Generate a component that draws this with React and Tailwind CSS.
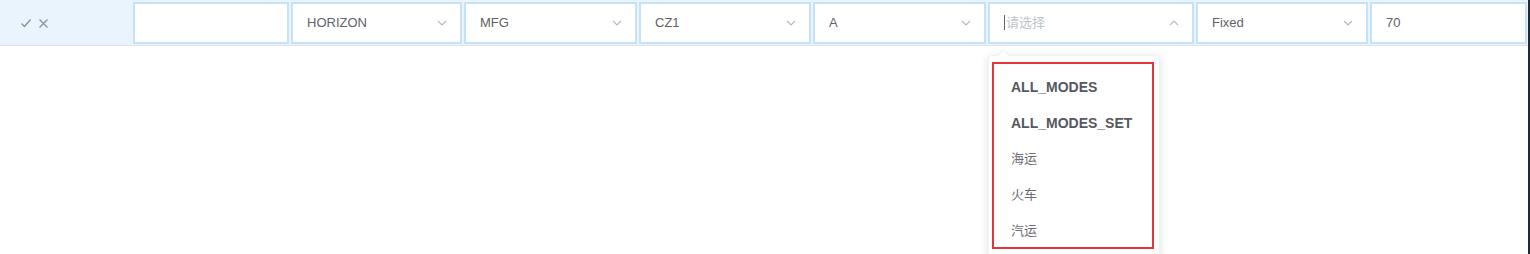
import React from 'react';

const font = { fontFamily: '"Liberation Sans", "Noto Sans CJK SC", sans-serif' };

const Chevron = ({ up }) => (
  <svg width="12" height="12" viewBox="0 0 12 12" className="text-[#b4b8bf]">
    <path d={up ? 'M2 8 L6 4 L10 8' : 'M2 4 L6 8 L10 4'} fill="none" stroke="currentColor" strokeWidth="1.1" />
  </svg>
);

const Select = ({ value, width, placeholder, open }) => (
  <div
    className={`h-[42px] flex items-center justify-between bg-white border-2 border-[#c6e2f9] pl-[14px] pr-[12px] ${width}`}
  >
    {placeholder ? (
      <span className="flex items-center text-[13px] text-[#c0c4cc]">
        <span className="w-px h-[15px] bg-[#606266] mr-px"></span>
        {placeholder}
      </span>
    ) : (
      <span className="text-[13px] text-[#606266]">{value}</span>
    )}
    <Chevron up={open} />
  </div>
);

export default function App() {
  const options = [
    { label: 'ALL_MODES', bold: true },
    { label: 'ALL_MODES_SET', bold: true },
    { label: '海运' },
    { label: '火车' },
    { label: '汽运' },
  ];

  return (
    <div className="relative w-[1530px] h-[254px] bg-white flex overflow-hidden" style={font}>
      <div className="flex-1">
        <div className="h-[46px] flex items-center gap-[2px] bg-[#e9f4fd] border-b border-[#dfe3e8]">
          <div className="w-[131px] h-full flex items-center pl-[20px] pt-px gap-[6px] text-[#8b8f96]">
            <svg width="12" height="12" viewBox="0 0 12 12">
              <path d="M1.5 6.5 L4.5 9.5 L10.5 2.5" fill="none" stroke="currentColor" strokeWidth="1.3" />
            </svg>
            <svg width="11" height="11" viewBox="0 0 11 11">
              <path d="M1.5 1.5 L9.5 9.5 M9.5 1.5 L1.5 9.5" fill="none" stroke="currentColor" strokeWidth="1.2" />
            </svg>
          </div>
          <div className="w-[156px] h-[42px] bg-white border-2 border-[#c6e2f9]"></div>
          <Select value="HORIZON" width="w-[171px]" />
          <Select value="MFG" width="w-[173px]" />
          <Select value="CZ1" width="w-[172px]" />
          <Select value="A" width="w-[173px]" />
          <Select placeholder="请选择" width="w-[206px]" open />
          <Select value="Fixed" width="w-[172px]" />
          <div className="w-[157px] h-[42px] bg-white border-2 border-[#c6e2f9] flex items-center pl-[14px] text-[13px] text-[#606266]">
            70
          </div>
        </div>
      </div>
      <div className="w-[2px] bg-[#1f2a36]"></div>

      {/* dropdown */}
      <div className="absolute left-[988px] top-[55px] w-[172px] h-[210px] bg-white shadow-[0_2px_10px_rgba(0,0,0,0.12)] border border-[#eef0f3] rounded-sm">
        <div className="absolute -top-[5px] left-[10px] w-[9px] h-[9px] bg-white border-l border-t border-[#eef0f3] rotate-45"></div>
        <div className="ml-[3px] mt-[6px] w-[162px] h-[187px] border-2 border-[#e8323c] flex flex-col pt-[5px]">
          {options.map((o) => (
            <div
              key={o.label}
              className={`h-[36px] shrink-0 flex items-center pl-[17px] ${
                o.bold ? 'text-[14px] font-bold text-[#55585e]' : 'text-[13px] text-[#6b6e74]'
              }`}
            >
              {o.label}
            </div>
          ))}
        </div>
      </div>
    </div>
  );
}
